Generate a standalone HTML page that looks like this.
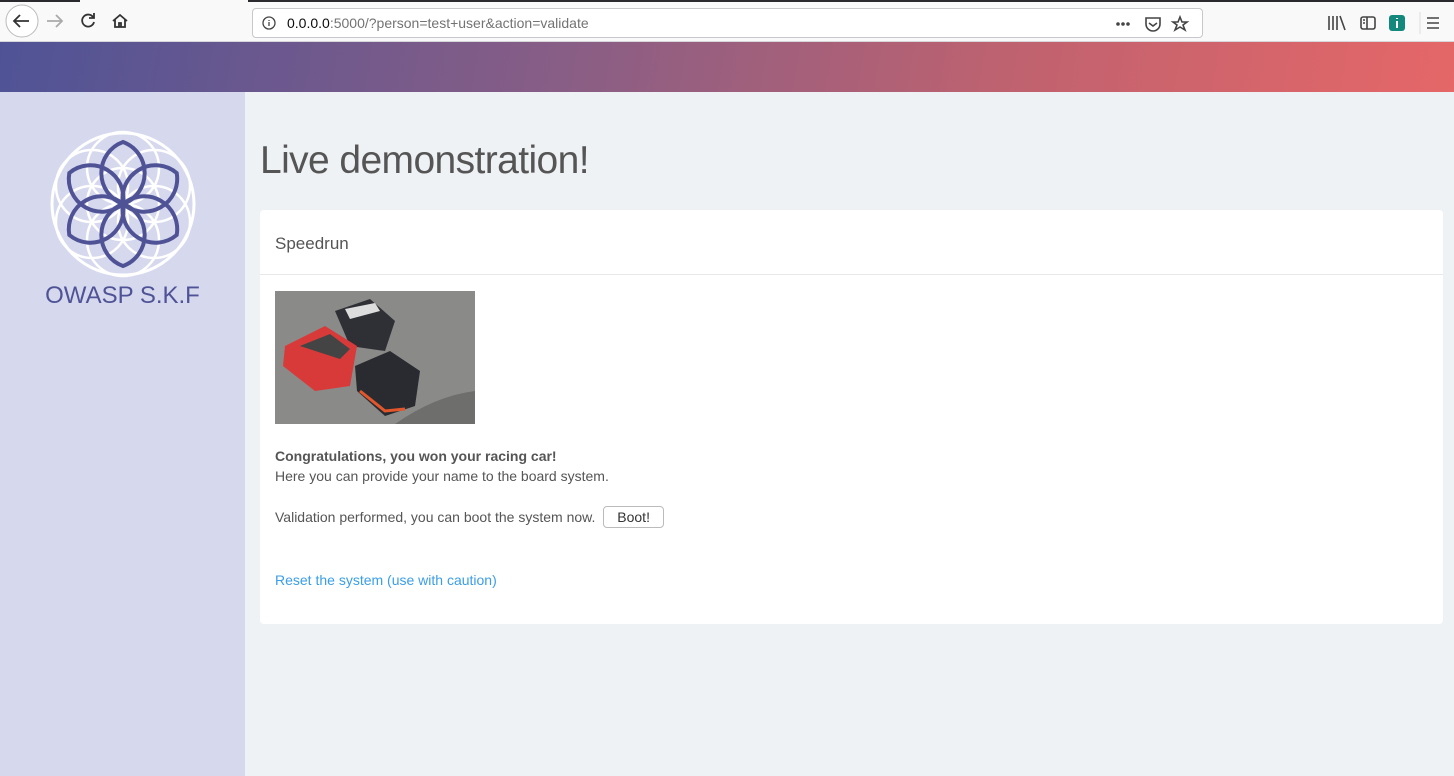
<!DOCTYPE html>
<html><head><meta charset="utf-8"><style>
*{margin:0;padding:0;box-sizing:border-box}
body{width:1454px;height:776px;overflow:hidden;font-family:"Liberation Sans",sans-serif;background:#eff2f5;position:relative}
.top{position:absolute;left:0;top:0;width:1454px;height:2px;background:#2a2a2e}
.tab{position:absolute;left:80px;top:0;width:168px;height:2px;background:#f9f9fa}
.tb{position:absolute;left:0;top:2px;width:1454px;height:40px;background:#f9f9fa;border-bottom:1px solid #d7d7db}
.url{position:absolute;left:252px;top:6px;width:951px;height:30px;border:1px solid #c8c8cc;border-radius:4px;background:#fff;font-size:14px;color:#737373;line-height:28px;padding-left:34px}
.url b{font-weight:normal;color:#0c0c0d}
.grad{position:absolute;left:0;top:42px;width:1454px;height:50px;background:linear-gradient(100deg,#4f5396 0%,#8a5e85 40%,#c0626f 70%,#e56768 100%)}
.side{position:absolute;left:0;top:92px;width:245px;height:684px;background:#d6d8ee}
.brand{position:absolute;left:0;width:245px;text-align:center;font-size:24px;color:#4f5396}
h1{position:absolute;left:260px;top:139px;font-size:39px;font-weight:normal;color:#555;letter-spacing:-0.6px}
.card{position:absolute;left:260px;top:210px;width:1183px;height:414px;background:#fff;border-radius:4px}
.ch{height:65px;border-bottom:1px solid #e8e8e8;font-size:17px;color:#555;padding:24px 0 0 15px}
.t{position:absolute;left:15px;font-size:14px;color:#555}
.btn{display:inline-block;border:1px solid #bbb;border-radius:4px;padding:2px 13px;margin-left:4px;background:#fff;color:#333}
a{color:#3a9ee8;text-decoration:none}
</style></head><body>
<div class="top"></div><div class="tab"></div>
<div class="tb">
<svg style="position:absolute;left:0;top:0" width="140" height="40" fill="none" stroke="#333" stroke-width="1.8">
<circle cx="22" cy="19" r="16" fill="#fff" stroke="#bbb" stroke-width="1"/>
<path d="M29 19H15M20 13l-6 6 6 6"/>
<path d="M47 19h14M56 13l6 6-6 6" stroke="#aaa"/>
<path d="M93 15a6 6 0 1 0 1 5M94 11v5h-5"/>
<path d="M113 19l7-6 7 6M115 17v8h10v-8M119 25v-4h2v4"/>
</svg>
<div class="url"><svg style="position:absolute;left:9px;top:7px" width="14" height="14" fill="none" stroke="#444" stroke-width="1.3"><circle cx="7" cy="7" r="6"/><path d="M7 6v4M7 4v1"/></svg><b>0.0.0.0</b>:5000/?person=test+user&amp;action=validate
<svg style="position:absolute;right:8px;top:6px" width="80" height="18" fill="none" stroke="#444" stroke-width="1.6"><circle cx="4" cy="9" r="1" fill="#444"/><circle cx="9" cy="9" r="1" fill="#444"/><circle cx="14" cy="9" r="1" fill="#444"/><path d="M32 3h14v6a7 7 0 0 1-14 0zM35 8l4 3 4-3"/><path d="M66 2l2 5h5l-4 3 2 5-5-3-5 3 2-5-4-3h5z"/></svg></div>
<svg style="position:absolute;left:1320px;top:8px" width="134" height="26" fill="none" stroke="#444" stroke-width="1.6">
<path d="M9 6v14M13 6v14M17 6v14M20 6l5 14"/>
<rect x="41" y="7" width="14" height="12" rx="2"/><path d="M47 7v12M43 10h2M43 13h2"/>
<rect x="69" y="5" width="16" height="16" rx="3" fill="#12897c" stroke="none"/><path d="M77 11v7M77 8v1" stroke="#fff" stroke-width="2"/>
<path d="M100 2v22" stroke="#ddd" stroke-width="1"/>
<path d="M107 8h12M107 13h12M107 18h12"/>
</svg>
</div>
<div class="grad"></div>
<div class="side">
<svg style="position:absolute;left:0;top:0" width="245" height="200">
<g transform="translate(123,112)" fill="none">
<circle r="71" stroke="#fff" stroke-width="3"/>
<g stroke="#fff" stroke-width="2.5"><circle r="36"/><circle cx="0" cy="-36" r="36"/><circle cx="0" cy="36" r="36"/><circle cx="31" cy="-18" r="36"/><circle cx="-31" cy="-18" r="36"/><circle cx="31" cy="18" r="36"/><circle cx="-31" cy="18" r="36"/></g>
<g stroke="#4f5396" stroke-width="4">
<path id="p" d="M0 0A33 33 0 0 1 0 -62A33 33 0 0 1 0 0Z"/>
<use href="#p" transform="rotate(60)"/><use href="#p" transform="rotate(120)"/><use href="#p" transform="rotate(180)"/><use href="#p" transform="rotate(240)"/><use href="#p" transform="rotate(300)"/>
</g></g></svg>
<div class="brand" style="top:190px">OWASP S.K.F</div>
</div>
<h1>Live demonstration!</h1>
<div class="card">
<div class="ch">Speedrun</div>
<svg style="position:absolute;left:15px;top:81px" width="200" height="133">
<rect width="200" height="133" fill="#8a8a88"/>
<path d="M120 133Q160 105 200 100V133Z" fill="#6e6e6c"/>
<path d="M60 20L95 8 120 30 110 60 75 55Z" fill="#2f2f36"/>
<path d="M70 18l30-6 5 8-30 8z" fill="#ddd"/>
<path d="M10 55L50 35 82 55 75 95 40 100 8 75Z" fill="#d83a3a"/>
<path d="M25 55l30-12 20 15-10 10z" fill="#444"/>
<path d="M80 75L115 60 145 80 140 115 110 125 82 100Z" fill="#2a2b30"/>
<path d="M85 100l25 20 20-2" stroke="#e2562b" stroke-width="3" fill="none"/>
</svg>
<div class="t" style="top:238px;font-weight:bold">Congratulations, you won your racing car!</div>
<div class="t" style="top:258px">Here you can provide your name to the board system.</div>
<div class="t" style="top:296px">Validation performed, you can boot the system now. <span class="btn">Boot!</span></div>
<div class="t" style="top:362px"><a>Reset the system (use with caution)</a></div>
</div>
</body></html>
